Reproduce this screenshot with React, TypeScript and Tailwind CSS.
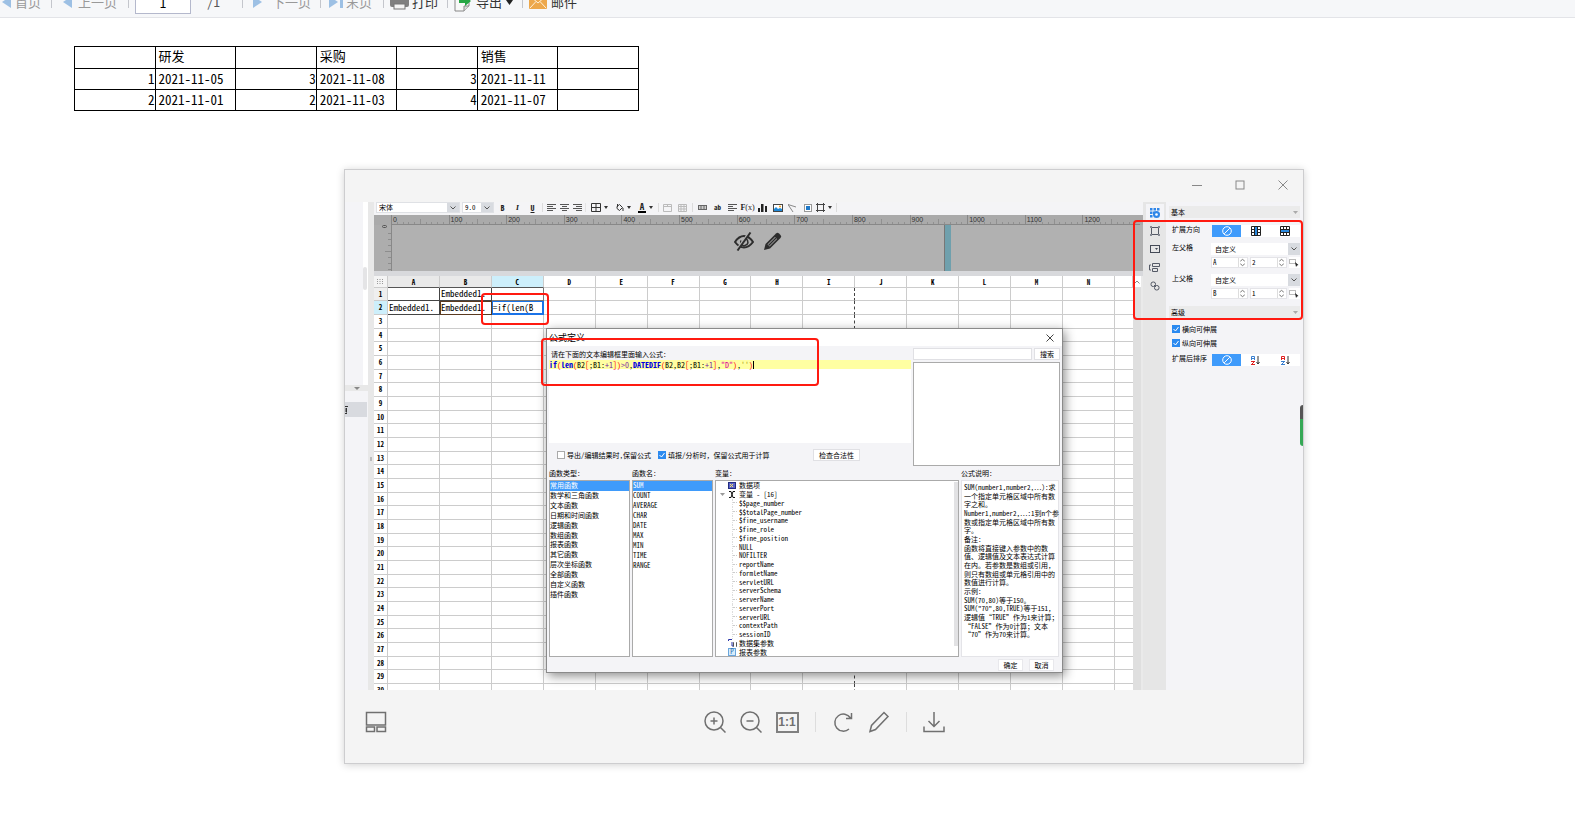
import type { ReactNode } from "react";

const COLUMNS = ["A", "B", "C", "D", "E", "F", "G", "H", "I", "J", "K", "L", "M", "N", ""];
const ROWS = Array.from({ length: 30 }, (_, i) => i + 1);
const RULER = Array.from({ length: 13 }, (_, i) => i * 100);

const CELLS: Record<string, string> = {
  B1: "Embedded1.",
  A2: "Embedded1.",
  B2: "Embedded1.",
  C2: "=if(len(B",
};

const CELL_STYLE: Record<string, string> = {
  A1: "border-[#444]",
  B1: "border-[#444]",
  C1: "border-[#777]",
  A2: "border-[#444]",
  B2: "border-[#5a3a20] shadow-[inset_1px_1px_0_#5a3a20]",
  C2: "border-[#1a73e8] shadow-[inset_1px_1px_0_#1a73e8,inset_-1px_-1px_0_#1a73e8]",
};

const REPORT = [
  ["1", "2021-11-05", "3", "2021-11-08", "3", "2021-11-11", ""],
  ["2", "2021-11-01", "2", "2021-11-03", "4", "2021-11-07", ""],
];

const CATEGORIES = [
  "常用函数", "数学和三角函数", "文本函数", "日期和时间函数", "逻辑函数", "数组函数",
  "报表函数", "其它函数", "层次坐标函数", "全部函数", "自定义函数", "插件函数",
];

const FUNCTIONS = ["SUM", "COUNT", "AVERAGE", "CHAR", "DATE", "MAX", "MIN", "TIME", "RANGE"];

const VARIABLES = [
  "$$page_number", "$$totalPage_number", "$fine_username", "$fine_role", "$fine_position",
  "NULL", "NOFILTER", "reportName", "formletName", "servletURL", "serverSchema",
  "serverName", "serverPort", "serverURL", "contextPath", "sessionID",
];

const DESCRIPTION = [
  "SUM(number1,number2,…):求",
  "一个指定单元格区域中所有数",
  "字之和。",
  "Number1,number2,…:1到n个参",
  "数或指定单元格区域中所有数",
  "字。",
  "备注:",
  "函数将直接键入参数中的数",
  "值、逻辑值及文本表达式计算",
  "在内。若参数是数组或引用，",
  "则只有数组或单元格引用中的",
  "数值进行计算。",
  "示例:",
  "SUM(70,80)等于150。",
  "SUM(\"70\",80,TRUE)等于151，",
  "逻辑值“TRUE”作为1来计算；",
  "“FALSE”作为0计算；文本",
  "“70”作为70来计算。",
];

const FORMULA: [string, string][] = [
  ["if", "text-[#0000e0] font-bold"],
  ["(", "text-[#ff0000]"],
  ["len", "text-[#0000e0] font-bold"],
  ["(", "text-[#ff0000]"],
  ["B2", "text-black"],
  ["[", "text-[#ff0000]"],
  [";B1:", "text-black"],
  ["+1", "text-[#7a1fa2]"],
  ["])", "text-[#ff0000]"],
  [">0", "text-[#7a1fa2]"],
  [",", "text-black"],
  ["DATEDIF", "text-[#0000e0] font-bold"],
  ["(", "text-[#ff0000]"],
  ["B2,B2", "text-black"],
  ["[", "text-[#ff0000]"],
  [";B1:", "text-black"],
  ["+1", "text-[#7a1fa2]"],
  ["]", "text-[#ff0000]"],
  [",", "text-black"],
  ["\"D\"", "text-[#dc009c]"],
  [")", "text-[#ff0000]"],
  [",", "text-black"],
  ["''", "text-[#b0a020]"],
  [")", "text-[#ff0000]"],
];

function Separator() {
  return <span className="h-3 w-px shrink-0 bg-[#c4c6cc]" />;
}

function PageArrow({ flip = false }: { flip?: boolean }) {
  return (
    <svg width="9" height="12" viewBox="0 0 9 12" className="shrink-0">
      <path d={flip ? "M0 0L9 6L0 12Z" : "M9 0L0 6L9 12Z"} fill="#9dc0e4" />
    </svg>
  );
}

function PagerBar() {
  return (
    <header className="flex h-[18px] items-end overflow-hidden border-b border-[#e3e4e8] bg-[#f6f7f9] text-[13px]">
      <div className="flex h-[30px] shrink-0 items-center leading-4">
        <button className="flex w-[51px] items-center gap-1 pl-[2px] text-[#999]">
          <PageArrow />
          首页
        </button>
        <Separator />
        <button className="flex w-[76px] items-center gap-[6px] pl-[11px] text-[#999]">
          <PageArrow />
          上一页
        </button>
        <Separator />
        <label className="flex w-[113px] items-center gap-4 pl-[6px] text-[#555]">
          <input aria-label="页码" defaultValue="1" className="h-[23px] w-[56px] border border-[#b4b8cc] bg-white text-center text-black" />
          /1
        </label>
        <Separator />
        <button className="flex w-[77px] items-center gap-[10px] pl-[10px] text-[#999]">
          <PageArrow flip />
          下一页
        </button>
        <Separator />
        <button className="flex w-[62px] items-center pl-[8px] text-[#999]">
          <PageArrow flip />
          <span className="mr-[3px] ml-[2px] h-3 w-[3px] bg-[#9dc0e4]" />
          末页
        </button>
        <Separator />
        <button className="flex w-[63px] items-center gap-[3px] pl-[6px] text-[#333]">
          <svg width="19" height="16" viewBox="0 0 19 16">
            <rect x="4" y="0" width="11" height="6" fill="#aaa" />
            <rect x="0" y="4" width="19" height="9" rx="2" fill="#808080" />
            <rect x="4" y="10" width="11" height="5" fill="#f4f4f4" stroke="#777" />
          </svg>
          打印
        </button>
        <Separator />
        <button className="flex w-[74px] items-center gap-1 pl-[6px] text-[#333]">
          <svg width="18" height="20" viewBox="0 0 18 20">
            <path d="M1 1H15V14L10 19H1Z" fill="#f8f8f8" stroke="#888" />
            <path d="M15 14H10V19" fill="#ddd" stroke="#888" />
            <path d="M5 11V7H11V4L17 9L11 14V11Z" fill="#28a745" />
          </svg>
          导出
          <svg width="7" height="5" viewBox="0 0 7 5"><path d="M0 0H7L3.500 5Z" fill="#222" /></svg>
        </button>
        <Separator />
        <button className="flex items-center gap-1 pl-[6px] text-[#333]">
          <svg width="18" height="14" viewBox="0 0 18 14">
            <rect width="18" height="14" rx="1" fill="#eda84c" />
            <path d="M1 1L9 8L17 1M1 13L7 6.500M17 13L11 6.500" fill="none" stroke="#fff0d8" />
          </svg>
          邮件
        </button>
      </div>
    </header>
  );
}

function ReportTable() {
  return (
    <table className="mt-[28px] ml-[74px] w-[565px] table-fixed border-collapse text-[13px] leading-4 text-black">
      <thead>
        <tr className="h-[22px]">
          {["", "研发", "", "采购", "", "销售", ""].map((name, i) => (
            <th key={i} className="border border-black pl-[3px] text-left align-top leading-[18px] font-normal">{name}</th>
          ))}
        </tr>
      </thead>
      <tbody>
        {REPORT.map((row) => (
          <tr key={row[0]} className="h-[21px]">
            {row.map((value, i) => (
              <td key={i} className={`border border-black ${i % 2 ? "pl-[3px] text-left" : "text-right"}`}>{value}</td>
            ))}
          </tr>
        ))}
      </tbody>
    </table>
  );
}

function Chevron() {
  return (
    <span className="pointer-events-none flex w-3 shrink-0 items-center justify-center bg-[#d8dbe0]">
      <svg width="6" height="4" viewBox="0 0 6 4"><path d="M0.500 0.500L3 3L5.500 0.500" fill="none" stroke="#555" /></svg>
    </span>
  );
}

function Caret() {
  return <svg width="4" height="3" viewBox="0 0 4 3"><path d="M0 0H4L2 3Z" fill="#333" /></svg>;
}

function Tool({ label, children, className = "w-[15px]" }: { label: string; children: ReactNode; className?: string }) {
  return (
    <button aria-label={label} className={`flex h-full shrink-0 items-center justify-center gap-[3px] text-[8px] text-[#222] ${className}`}>
      {children}
    </button>
  );
}

function AlignIcon({ d }: { d: string }) {
  return <svg width="9" height="8" viewBox="0 0 9 8"><path d={d} stroke="#555" fill="none" /></svg>;
}

function FormatBar() {
  return (
    <div className="flex h-[13px] items-center overflow-hidden bg-[#f4f4f6] pb-[2px] pl-[2px] text-[7px]">
      <div className="flex h-[11px] w-[84px] border border-[#dfe1e5] bg-white">
        <select aria-label="字体" className="min-w-0 flex-1 appearance-none pl-[2px] leading-[9px]"><option>宋体</option></select>
        <Chevron />
      </div>
      <div className="mr-px ml-[2px] flex h-[11px] w-[32px] border border-[#dfe1e5] bg-white">
        <select aria-label="字号" className="min-w-0 flex-1 appearance-none pl-[2px] leading-[9px]"><option>9.0</option></select>
        <Chevron />
      </div>
      <Tool label="加粗"><b>B</b></Tool>
      <Tool label="倾斜"><i className="font-serif font-bold">I</i></Tool>
      <Tool label="下划线"><u className="font-bold">U</u></Tool>
      <span className="mx-[2px] h-[9px] w-px bg-[#dcdcdc]" />
      <Tool label="左对齐" className="w-[13px]"><AlignIcon d="M0 0.500H9M0 2.500H6M0 4.500H9M0 6.500H6" /></Tool>
      <Tool label="居中" className="w-[13px]"><AlignIcon d="M0 0.500H9M2 2.500H7M0 4.500H9M2 6.500H7" /></Tool>
      <Tool label="右对齐" className="w-[13px]"><AlignIcon d="M0 0.500H9M3 2.500H9M0 4.500H9M3 6.500H9" /></Tool>
      <span className="mx-px h-[9px] w-px bg-[#e4e4e4]" />
      <Tool label="边框" className="w-6">
        <svg width="10" height="9" viewBox="0 0 10 9"><path d="M0.500 0.500H9.500V8.500H0.500ZM5 0V9M0 4.500H10" stroke="#333" fill="none" /></svg>
        <Caret />
      </Tool>
      <Tool label="填充" className="w-[23px]">
        <svg width="9" height="9" viewBox="0 0 9 9"><path d="M2 3.500L4.500 1.500L7.500 4.500L4.500 7.500L2 5.500ZM2.500 4V1M8 5V8" stroke="#333" fill="none" /></svg>
        <Caret />
      </Tool>
      <Tool label="文字颜色" className="w-[23px]">
        <b className="border-b-2 border-black px-[2px] text-[9px] leading-[8px]">A</b>
        <Caret />
      </Tool>
      <span className="mx-px h-[9px] w-px bg-[#dcdcdc]" />
      <Tool label="合并单元格">
        <svg width="9" height="8" viewBox="0 0 9 8"><path d="M0.500 0.500H8.500V7.500H0.500ZM0 2.500H9M4.500 0V3" stroke="#bbb" fill="none" /></svg>
      </Tool>
      <Tool label="取消合并">
        <svg width="9" height="8" viewBox="0 0 9 8"><path d="M0.500 0.500H8.500V7.500H0.500ZM0 2.500H9M0 5H9M3 0V8M6 0V8" stroke="#bbb" fill="none" /></svg>
      </Tool>
      <span className="mx-[2px] h-[9px] w-px bg-[#dcdcdc]" />
      <Tool label="单元格元素">
        <svg width="9" height="5" viewBox="0 0 9 5"><rect x="0.500" y="0.500" width="8" height="4" fill="#ccc" stroke="#666" /><path d="M3 1V4M6 1V4" stroke="#666" /></svg>
      </Tool>
      <Tool label="文本"><span className="text-[7px] font-bold">ab</span></Tool>
      <Tool label="富文本"><AlignIcon d="M0 0.500H9M0 2.500H5M0 4.500H9M0 6.500H6" /></Tool>
      <Tool label="公式"><span className="font-['Liberation_Serif',serif] text-[8px]"><b>F</b>(x)</span></Tool>
      <Tool label="图表">
        <svg width="9" height="8" viewBox="0 0 9 8"><path d="M0 4H2V8H0ZM3 0H5.500V8H3ZM7 2H9V8H7Z" fill="#222" /></svg>
      </Tool>
      <Tool label="图片">
        <svg width="10" height="8" viewBox="0 0 10 8"><rect x="0.500" y="0.500" width="9" height="7" fill="#fff" stroke="#444" /><path d="M1 5L3 3L5 5L7 4L9 5V7H1Z" fill="#1e88d8" /><circle cx="7" cy="2.500" r="1" fill="#f0a020" /></svg>
      </Tool>
      <Tool label="斜线">
        <svg width="9" height="8" viewBox="0 0 9 8"><path d="M0 0.500L8 3M0 0.500L5 8" stroke="#888" fill="none" /></svg>
      </Tool>
      <Tool label="子报表">
        <svg width="8" height="8" viewBox="0 0 8 8"><rect x="0.500" y="0.500" width="7" height="7" fill="#fff" stroke="#999" /><rect x="2" y="2" width="4" height="4" fill="#1e78c8" /></svg>
      </Tool>
      <Tool label="控件" className="w-[18px]">
        <svg width="9" height="9" viewBox="0 0 9 9"><path d="M1.500 0V9M7.500 0V9M0 1.500H9M0 7.500H9" stroke="#444" fill="none" /></svg>
        <Caret />
      </Tool>
      <span className="ml-[3px] h-[9px] w-px bg-[#dcdcdc]" />
    </div>
  );
}

function Ruler() {
  return (
    <div className="grid h-[10px] grid-cols-13 bg-[#aaa] pr-[3px] pl-[17px] font-['Liberation_Sans',sans-serif] text-[7px] leading-[9px] text-[#333]">
      {RULER.map((mark) => (
        <div key={mark} className="relative border-b border-l border-[#888]">
          <span className="relative pl-px">{mark}</span>
          <div className="absolute inset-x-0 bottom-0 flex items-end">
            {Array.from({ length: 10 }, (_, i) => (
              <span key={i} className={`flex-1 ${i === 0 ? "" : "border-l border-[#909090]"} ${i === 5 ? "h-[5px]" : "h-[2px]"}`} />
            ))}
          </div>
        </div>
      ))}
    </div>
  );
}

function HiddenBody() {
  return (
    <div className="flex h-[46px] bg-[#b1b1b1]">
      <div className="flex w-[18px] flex-col items-end border-r border-[#888] bg-[#adadad]">
        <span className="mr-1 h-[3px] w-[5px] rounded-full border border-[#555]" />
        {Array.from({ length: 7 }, (_, i) => (
          <span key={i} className={`mt-[5px] h-px bg-[#8d8d8d] ${i === 3 ? "w-[6px]" : "w-[3px]"}`} />
        ))}
      </div>
      <div className="flex w-[553px] justify-end gap-[9px] border-r border-[#777] pt-[7px] pr-[162px]">
        <svg width="20" height="19" viewBox="0 0 20 19" fill="none" stroke="#2d2d2d">
          <path d="M1 10C4 5.500 7 4 10 4C13 4 16 5.500 19 10C16 14 13 15.500 10 15.500C7 15.500 4 14 1 10Z" strokeWidth="2" />
          <path d="M10 6A4 4 0 0 1 13 12.500L10 14A4 4 0 0 1 7 8.500" strokeWidth="1.500" />
          <path d="M15 0.500L2.500 18" stroke="#b1b1b1" strokeWidth="2" />
          <path d="M16.500 0.500L3.500 18.500" strokeWidth="2" />
        </svg>
        <svg width="19" height="19" viewBox="0 0 19 19">
          <path d="M1 18L2.500 12L13 1.500Q14.500 0 16 1.500L17.500 3Q19 4.500 17.500 6L7 16.500Z" fill="#2d2d2d" />
          <path d="M4.500 12.500L12 5L14 7L6.500 14.500Z" fill="#b1b1b1" />
          <path d="M5.500 13.500L13 6" stroke="#2d2d2d" strokeWidth="1.500" />
        </svg>
      </div>
      <div className="w-[6px] bg-[#6fa0ad]" />
    </div>
  );
}

function columnHead(name: string) {
  if (name === "C") return "bg-[#cdeffb]";
  if (name === "A" || name === "B") return "bg-[#e9e9e9]";
  return "bg-white";
}

function Sheet() {
  return (
    <div className="flex min-h-0 flex-1 border-t-[5px] border-[#d8d9dc]">
      <div className="min-w-0 flex-1 overflow-hidden bg-white">
        <table className="w-full table-fixed border-separate border-spacing-0 text-[7px] leading-[9px] text-black">
          <colgroup>
            <col className="w-[14px]" />
            {COLUMNS.map((name) => <col key={name} className={name ? "" : "w-[18px]"} />)}
          </colgroup>
          <thead>
            <tr className="h-[12px]">
              <th className="border-r border-b border-[#ccc] bg-[#f4f4f4] p-0">
                <svg width="7" height="6" viewBox="0 0 7 6" className="mx-auto"><path d="M0 0.500H7M0 2.500H7M0 4.500H7" stroke="#999" strokeDasharray="1 1.500" /></svg>
              </th>
              {COLUMNS.map((name) => (
                <th
                  key={name}
                  className={`border-r border-b p-0 pt-px font-bold ${name && name < "D" ? "border-b-[#555]" : "border-b-[#ccc]"} border-r-[#ccc] ${columnHead(name)}`}
                >
                  {name}
                </th>
              ))}
            </tr>
          </thead>
          <tbody>
            {ROWS.map((row) => (
              <tr key={row} className={row % 3 === 1 ? "h-[13px]" : "h-[14px]"}>
                <th className={`border-r border-b border-[#ccc] p-0 font-bold ${row === 2 ? "bg-[#cdeffb]" : row === 1 ? "bg-[#efefef]" : "bg-white"}`}>{row}</th>
                {COLUMNS.map((name) => {
                  const key = name + row;
                  return (
                    <td
                      key={key}
                      className={`overflow-hidden border-b p-0 pl-px text-[9px] leading-[10px] whitespace-nowrap ${CELL_STYLE[key] ?? "border-[#ccc]"} ${name ? "border-r" : ""} ${name === "I" ? "border-r-[#444] [border-right-style:dashed]" : ""}`}
                    >
                      {CELLS[key]}
                    </td>
                  );
                })}
              </tr>
            ))}
          </tbody>
        </table>
      </div>
      <div className="w-[10px] border-r-2 border-[#eaeaea] bg-[#dfdfdf]">
        <div className="flex h-[11px] items-center justify-center bg-white">
          <svg width="6" height="4" viewBox="0 0 6 4"><path d="M0.500 3.500L3 1L5.500 3.500" fill="none" stroke="#888" /></svg>
        </div>
      </div>
    </div>
  );
}

function LeftDock() {
  return (
    <aside className="flex shrink-0 bg-[#f4f4f7]">
      <div className="w-[23px]">
        <div className="flex h-[183px] justify-end">
          <div className="w-[5px] bg-white pt-[65px]">
            <div className="h-[23px] w-1 rounded-sm bg-[#e4e4e6]" />
          </div>
        </div>
        <div className="flex h-[6px] items-center justify-center bg-[#e8e8e8]">
          <svg width="6" height="3" viewBox="0 0 6 3"><path d="M0 0H6L3 3Z" fill="#888" /></svg>
        </div>
        <div className="mt-[11px] flex h-[15px] w-[22px] items-center overflow-hidden bg-[#d8dadf]">
          <svg width="3" height="8" viewBox="0 0 3 8"><path d="M0 0.500H3M1.500 2V6.500M0 3H2M0 5H2M0 7.500H2" fill="none" stroke="#333" /></svg>
        </div>
      </div>
      <div className="flex w-[6px] items-center justify-center bg-[#e8e8e8]">
        <span className="mt-[25px] h-1 w-[2px] bg-[#bbb]" />
      </div>
    </aside>
  );
}

function IconStrip() {
  return (
    <nav className="flex w-[23px] shrink-0 flex-col items-center bg-[#e6e6e6] pt-[2px]">
      <button aria-label="单元格元素" className="flex h-[17px] w-[18px] items-center justify-center bg-[#f4f4f7]">
        <svg width="10" height="10" viewBox="0 0 10 10" fill="#2f86e8">
          <path d="M0 0H2.500V2.500H0ZM3.500 0H6V2.500H3.500ZM7 0H9.500V2.500H7ZM0 3.500H2.500V6H0ZM0 7H2.500V9.500H0ZM3 3.500H5V6H3Z" />
          <circle cx="6.500" cy="6.500" r="3.500" />
          <circle cx="6.500" cy="6.500" r="1.300" fill="#fff" />
        </svg>
      </button>
      <button aria-label="单元格属性" className="flex h-[19px] items-center">
        <svg width="10" height="10" viewBox="0 0 10 10"><path d="M1.500 1.500H8.500V8.500H1.500Z" fill="none" stroke="#555a66" /><path d="M0 0H2V2H0ZM8 0H10V2H8ZM0 8H2V10H0ZM8 8H10V10H8Z" fill="#888c96" /></svg>
      </button>
      <button aria-label="控件设置" className="flex h-[18px] items-center">
        <svg width="10" height="8" viewBox="0 0 10 8"><rect x="0.500" y="0.500" width="9" height="7" fill="none" stroke="#444a56" /><path d="M5 3H8L6.500 5Z" fill="#444a56" /></svg>
      </button>
      <button aria-label="条件属性" className="flex h-[18px] items-center">
        <svg width="11" height="9" viewBox="0 0 11 9"><path d="M3.500 0.500H10.500V3.500H3.500ZM3.500 5.500H8.500V8.500H3.500ZM2 2H0.500V7H2" fill="none" stroke="#555a66" /></svg>
      </button>
      <button aria-label="超级链接" className="flex h-[19px] items-center">
        <svg width="10" height="10" viewBox="0 0 10 10" fill="none" stroke="#555a66"><rect x="1" y="1" width="4.500" height="4.500" rx="2" /><rect x="4.500" y="4.500" width="4.500" height="4.500" rx="2" /><path d="M4 4L6 6" /></svg>
      </button>
    </nav>
  );
}

function NoneIcon() {
  return (
    <svg width="10" height="10" viewBox="0 0 10 10" fill="none" stroke="#fff"><circle cx="5" cy="5" r="4.300" /><path d="M2.200 7.800L7.800 2.200" /></svg>
  );
}

function GridIcon({ fill }: { fill: string }) {
  return (
    <svg width="10" height="10" viewBox="0 0 10 10"><path d="M0.500 0.500H9.500V9.500H0.500ZM3.500 0V10M6.500 0V10M0 3.500H10M0 6.500H10" fill="none" stroke="#222" /><path d={fill} fill="#2a8ae0" /></svg>
  );
}

function SortIcon({ up, down }: { up: string; down: string }) {
  return (
    <svg width="9" height="9" viewBox="0 0 9 9" fill="none">
      <path d="M0.500 4V0.500H3.500V4M0.500 2.500H3.500" stroke={up} />
      <path d="M0 5.500H4M3.500 5.500L0.500 8.500M0 8.500H4" stroke={down} />
      <path d="M7 0V8M5.500 6L7 8L8.500 6" stroke="#333" />
    </svg>
  );
}

function Choices({ icons }: { icons: ReactNode[] }) {
  return (
    <div className="grid h-3 w-[88px] grid-cols-3 bg-white">
      {icons.map((icon, i) => (
        <button key={i} aria-label={`选项${i + 1}`} className={`flex items-center justify-center ${i === 0 ? "bg-[#3f9bfb]" : ""}`}>{icon}</button>
      ))}
    </div>
  );
}

function Stepper({ label, value }: { label: string; value: string }) {
  return (
    <span className="flex h-[11px] w-[37px] border border-[#e4e4e8] bg-white">
      <input aria-label={label} defaultValue={value} className="w-0 min-w-0 flex-1 pl-px leading-[9px]" />
      <svg width="9" height="9" viewBox="0 0 9 9" className="shrink-0 border-l border-[#ddd]"><path d="M1.500 3L4 1L6.500 3M1.500 6L4 8L6.500 6" fill="none" stroke="#666" /></svg>
    </span>
  );
}

function ParentCell({ label, column, row }: { label: string; column: string; row: string }) {
  return (
    <div className="flex justify-between">
      <span className="leading-[9px]">{label}</span>
      <div className="flex w-[89px] flex-col gap-[2px]">
        <div className="flex h-3 bg-white">
          <select aria-label={label} className="min-w-0 flex-1 appearance-none pl-1 leading-3"><option>自定义</option></select>
          <Chevron />
        </div>
        <div className="flex gap-[2px]">
          <Stepper label={`${label}列`} value={column} />
          <Stepper label={`${label}行`} value={row} />
          <button aria-label="选择单元格" className="flex flex-1 items-center bg-white">
            <svg width="10" height="9" viewBox="0 0 10 9"><rect x="0.500" y="1.500" width="6" height="4" fill="none" stroke="#bbb" /><path d="M6 4L9.500 7L8 7.500L7 9Z" fill="#222" /></svg>
          </button>
        </div>
      </div>
    </div>
  );
}

function PanelTitle({ title }: { title: string }) {
  return (
    <h3 className="flex h-3 items-center justify-between bg-[#ebebeb] pr-[2px] pl-[2px] leading-3">
      {title}
      <svg width="5" height="3" viewBox="0 0 5 3"><path d="M0 0H5L2.500 3Z" fill="#aaa" /></svg>
    </h3>
  );
}

function Tick({ label, checked = false }: { label: string; checked?: boolean }) {
  return (
    <label className="flex items-center gap-[2px] whitespace-nowrap">
      <input type="checkbox" defaultChecked={checked} className="sr-only" />
      <svg width="8" height="8" viewBox="0 0 8 8" className="shrink-0">
        <rect x="0.500" y="0.500" width="7" height="7" fill={checked ? "#2b8af0" : "#fff"} stroke={checked ? "#2b8af0" : "#aaa"} />
        {checked && <path d="M1.500 4L3.500 6L6.500 2" fill="none" stroke="#fff" />}
      </svg>
      {label}
    </label>
  );
}

function PropertyPanel() {
  return (
    <aside className="w-[137px] shrink-0 bg-[#f4f4f7] pt-[4px] pr-[3px] pl-[3px] text-[7px] leading-3 text-black">
      <PanelTitle title="基本" />
      <div className="flex flex-col gap-[6px] pt-[7px] pl-[3px]">
        <div className="flex justify-between">
          <span className="leading-[8px]">扩展方向</span>
          <Choices icons={[<NoneIcon />, <GridIcon fill="M4 1H6V9H4Z" />, <GridIcon fill="M1 4H9V6H1Z" />]} />
        </div>
        <ParentCell label="左父格" column="A" row="2" />
        <ParentCell label="上父格" column="B" row="1" />
      </div>
      <div className="pt-[7px]">
        <PanelTitle title="高级" />
      </div>
      <div className="flex flex-col gap-[2px] pt-[5px] pl-[3px]">
        <Tick label="横向可伸展" checked />
        <Tick label="纵向可伸展" checked />
        <div className="flex justify-between pt-[3px]">
          <span className="leading-[8px]">扩展后排序</span>
          <Choices icons={[<NoneIcon />, <SortIcon up="#3a80d0" down="#e02020" />, <SortIcon up="#e02020" down="#3a80d0" />]} />
        </div>
      </div>
    </aside>
  );
}

function FunctionList({ title, items, className }: { title: string; items: string[]; className: string }) {
  return (
    <section className="w-[81px]">
      <h4 className="h-[14px] leading-[14px]">{title}</h4>
      <div className="h-[177px] border border-[#aaa] bg-white">
        <ul className={`flex flex-col ${className}`}>
          {items.map((item, i) => (
            <li key={item} className={`flex min-h-0 flex-1 items-center whitespace-nowrap ${i === 0 ? "bg-[#3f9bfb] text-white" : ""}`}>{item}</li>
          ))}
        </ul>
      </div>
    </section>
  );
}

function VariableTree() {
  return (
    <section className="w-[244px]">
      <h4 className="h-[14px] leading-[14px]">变量:</h4>
      <div className="flex h-[177px] border border-[#aaa] bg-white">
        <ul className="flex min-w-0 flex-1 flex-col leading-[8px]">
          <li className="flex min-h-0 flex-1 items-center gap-[3px] pl-3">
            <svg width="8" height="7" viewBox="0 0 8 7"><rect x="0.500" y="0.500" width="7" height="6" fill="#5a64c8" stroke="#222c80" /><path d="M2 2L5 5M5 2L2 5" stroke="#ffe860" /></svg>
            数据项
          </li>
          <li className="flex min-h-0 flex-1 items-center gap-[3px] pl-1">
            <svg width="5" height="3" viewBox="0 0 5 3"><path d="M0 0H5L2.500 3Z" fill="#999" /></svg>
            <svg width="8" height="7" viewBox="0 0 8 7"><path d="M1 0.500H3L5 6.500H7M7 0.500H5L3 6.500H1" fill="none" stroke="#111" /></svg>
            变量 - [16]
          </li>
          {VARIABLES.map((name) => (
            <li key={name} className="flex min-h-0 flex-1 items-center">
              <span className="ml-4 h-full border-l border-dotted border-[#ddd]" />
              <span className="mr-[2px] w-[4px] border-t border-dotted border-[#ccc]" />
              {name}
            </li>
          ))}
          <li className="flex min-h-0 flex-1 items-center gap-[2px] pl-3">
            <svg width="9" height="9" viewBox="0 0 9 9" fill="none"><path d="M0.500 3V1.500H4M4 4V8H5" stroke="#2a35a8" /><path d="M6 4.500H5.500V8.500H6M8 4.500H8.500V8.500H8" stroke="#555" /></svg>
            数据集参数
          </li>
          <li className="flex min-h-0 flex-1 items-center gap-[3px] pl-3">
            <span className="flex h-[8px] w-[8px] items-center justify-center border border-[#6aa6dc] bg-[#d8ecfb] text-[7px] leading-[7px] text-[#2a6fb0]">P</span>
            报表参数
          </li>
        </ul>
        <span className="mt-px h-[164px] w-1 bg-[#e2e2e4]" />
      </div>
    </section>
  );
}

function FormulaDialog() {
  return (
    <div role="dialog" aria-label="公式定义" className="absolute top-[126px] left-[201px] w-[517px] border border-[#8a8a8a] bg-[#f4f4f7] text-[7px] leading-[9px] text-black shadow-[2px_3px_10px_rgba(0,0,0,0.45)]">
      <div className="flex h-[17px] items-center justify-between bg-white pr-2 pl-[2px] text-[9px]">
        公式定义
        <button aria-label="关闭">
          <svg width="8" height="8" viewBox="0 0 8 8"><path d="M0.500 0.500L7.500 7.500M7.500 0.500L0.500 7.500" stroke="#444" /></svg>
        </button>
      </div>
      <div className="flex justify-between pr-[2px] pl-[2px]">
        <div className="w-[362px]">
          <p className="h-[14px] pl-[2px] leading-[17px]">请在下面的文本编辑框里面输入公式:</p>
          <div role="textbox" aria-label="公式" className="h-[83px] bg-white">
            <pre className="flex h-[9px] items-center bg-[#ffffa2] font-['Noto_Sans_Mono_CJK_SC','Liberation_Mono',monospace] text-[8px] leading-[9px]">
              {FORMULA.map(([text, color], i) => <span key={i} className={color}>{text}</span>)}
              <span className="h-2 w-px bg-black" />
            </pre>
          </div>
          <div className="flex h-[21px] items-center pt-[3px] pl-2">
            <Tick label="导出/编辑结果时,保留公式" />
            <span className="w-[7px]" />
            <Tick label="填报/分析时，保留公式用于计算" checked />
            <button className="mr-[51px] ml-auto h-3 w-[47px] border border-[#e0e0e4] bg-white leading-[10px]">检查合法性</button>
          </div>
        </div>
        <div className="w-[147px] pt-[2px]">
          <div className="flex justify-between">
            <input aria-label="搜索函数" className="h-3 w-[119px] border border-[#e0e0e4] bg-white" />
            <button className="h-3 w-[26px] border border-[#e0e0e4] bg-white leading-[10px]">搜索</button>
          </div>
          <div className="mt-[2px] h-[104px] border border-[#aaa] bg-white" />
        </div>
      </div>
      <div className="flex gap-[2px] pl-[2px]">
        <FunctionList title="函数类型:" items={CATEGORIES} className="h-[118px]" />
        <FunctionList title="函数名:" items={FUNCTIONS} className="h-[89px]" />
        <VariableTree />
        <section className="w-[98px]">
          <h4 className="h-[14px] leading-[14px]">公式说明:</h4>
          <div className="h-[177px] border border-[#e4e4e8] bg-white pt-[2px] pl-[2px]">
            <div className="flex h-[156px] flex-col">
              {DESCRIPTION.map((line) => <p key={line} className="flex min-h-0 flex-1 items-center whitespace-nowrap">{line}</p>)}
            </div>
          </div>
        </section>
      </div>
      <div className="flex h-[15px] items-center justify-end gap-[6px] pr-2">
        <button className="h-3 w-[25px] border border-[#e8e8ec] bg-white leading-[10px]">确定</button>
        <button className="h-3 w-[25px] border border-[#e8e8ec] bg-white leading-[10px]">取消</button>
      </div>
    </div>
  );
}

function ViewerControls() {
  const icon = "h-[22px] w-[22px]";
  return (
    <div className="flex h-[73px] items-start pt-[21px] text-[#707070]">
      <button aria-label="缩略图" className="ml-[20px]">
        <svg className={icon} viewBox="0 0 22 22" fill="none" stroke="currentColor" strokeWidth="1.500"><path d="M1.500 1.500H20.500V14H1.500ZM1.500 16H9.500V20.500H1.500ZM12 16H20.500V20.500H12Z" /></svg>
      </button>
      <div className="-ml-[42px] flex flex-1 items-center justify-center gap-[14px]">
        <button aria-label="放大">
          <svg className={icon} viewBox="0 0 22 22" fill="none" stroke="currentColor" strokeWidth="1.500"><circle cx="10" cy="10" r="9" /><path d="M16.500 16.500L21.500 21.500M10 6.500V13.500M6.500 10H13.500" /></svg>
        </button>
        <button aria-label="缩小">
          <svg className={icon} viewBox="0 0 22 22" fill="none" stroke="currentColor" strokeWidth="1.500"><circle cx="10" cy="10" r="9" /><path d="M16.500 16.500L21.500 21.500M6.500 10H13.500" /></svg>
        </button>
        <button aria-label="原始大小" className="h-[21px] w-[23px] border-2 border-[#808080] text-center font-['Liberation_Sans',sans-serif] text-[12px] leading-[17px] font-bold">1:1</button>
        <span className="mx-[2px] h-5 w-px bg-[#ddd]" />
        <button aria-label="旋转">
          <svg className={icon} viewBox="0 0 22 22" fill="none" stroke="currentColor" strokeWidth="1.500"><path d="M17 18A8.500 8.500 0 1 1 18.500 7M19.500 2V7.500H14" /></svg>
        </button>
        <button aria-label="编辑">
          <svg className={icon} viewBox="0 0 22 22" fill="none" stroke="currentColor" strokeWidth="1.500"><path d="M2 20.500L3.500 14.500L16 1.500L20 5.500L7.500 18.500Z" /></svg>
        </button>
        <span className="mx-[2px] h-5 w-px bg-[#ddd]" />
        <button aria-label="下载">
          <svg className={icon} viewBox="0 0 22 22" fill="none" stroke="currentColor" strokeWidth="1.500"><path d="M11 1V15.500M5.500 10L11 15.500L16.500 10M1 15.500V20.500H21V15.500" /></svg>
        </button>
      </div>
    </div>
  );
}

function ImageViewer() {
  return (
    <div className="mt-[58px] mr-[271px] ml-[344px] border border-[#cdcdcf] bg-[#f4f4f4] shadow-[0_1px_8px_rgba(0,0,0,0.18)]">
      <div className="flex h-8 items-center justify-end gap-[33px] pr-[15px] pb-[2px]">
        <button aria-label="最小化"><svg width="10" height="10" viewBox="0 0 10 10"><path d="M0 5.500H10" stroke="#888" /></svg></button>
        <button aria-label="最大化"><svg width="10" height="10" viewBox="0 0 10 10"><rect x="1" y="1" width="8" height="8" fill="none" stroke="#888" /></svg></button>
        <button aria-label="关闭"><svg width="10" height="10" viewBox="0 0 10 10"><path d="M0.500 0.500L9.500 9.500M9.500 0.500L0.500 9.500" stroke="#888" /></svg></button>
      </div>
      <div className="relative flex h-[488px] overflow-hidden">
        <LeftDock />
        <main className="flex min-w-0 flex-1 flex-col">
          <FormatBar />
          <Ruler />
          <HiddenBody />
          <Sheet />
        </main>
        <IconStrip />
        <PropertyPanel />
        <FormulaDialog />
        <span className="pointer-events-none absolute top-[91px] left-[136px] h-[32px] w-[68px] rounded-sm border-2 border-[#ff1a10]" />
        <span className="pointer-events-none absolute top-[136px] left-[196px] h-[48px] w-[278px] rounded-sm border-2 border-[#ff1a10]" />
        <span className="pointer-events-none absolute top-[18px] right-0 h-[100px] w-[170px] rounded-sm border-2 border-[#ff1a10]" />
        <span className="absolute top-[203px] right-0 h-[41px] w-[3px] rounded-l-sm bg-linear-to-b from-[#555] from-35% to-[#35a855] to-35%" />
      </div>
      <ViewerControls />
    </div>
  );
}

export default function App() {
  return (
    <div className="min-h-screen bg-white pb-[54px] font-['Noto_Sans_Mono_CJK_SC','Noto_Sans_CJK_SC',sans-serif]">
      <PagerBar />
      <ReportTable />
      <ImageViewer />
    </div>
  );
}
